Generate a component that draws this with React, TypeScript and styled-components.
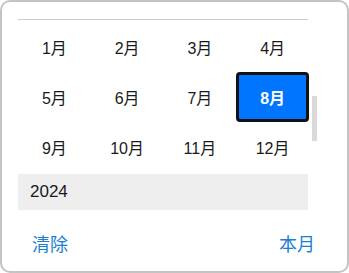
import styled, { createGlobalStyle } from "styled-components";

const GlobalStyle = createGlobalStyle`
  html, body {
    margin: 0;
    padding: 0;
    background: #ffffff;
  }
  * {
    box-sizing: border-box;
  }
`;

const months = ["1月", "2月", "3月", "4月", "5月", "6月", "7月", "8月", "9月", "10月", "11月", "12月"];
const selectedMonth = 7;

const App = () => {
  return (
    <>
      <GlobalStyle />
      <Panel>
        <Body>
          <Content>
            <Divider />
            <MonthGrid>
              {months.map((m, i) => (
                <MonthCell key={m} $active={i === selectedMonth}>
                  {m}
                </MonthCell>
              ))}
            </MonthGrid>
            <YearBar>2024</YearBar>
          </Content>
          <ScrollTrack>
            <ScrollThumb />
          </ScrollTrack>
        </Body>
        <Footer>
          <FooterButton>清除</FooterButton>
          <FooterButton>本月</FooterButton>
        </Footer>
      </Panel>
    </>
  );
};

export default App;

const Panel = styled.div`
  width: 349px;
  height: 273px;
  border: 2px solid #c4c4c4;
  border-radius: 10px;
  background: #ffffff;
  font-family: "Liberation Sans", Arial, "Noto Sans CJK SC", sans-serif;
  color: #1a1a1a;
  display: flex;
  flex-direction: column;
  overflow: hidden;
`;

const Body = styled.div`
  display: flex;
  flex-direction: row;
  padding-left: 16px;
`;

const Content = styled.div`
  width: 291px;
  display: flex;
  flex-direction: column;
`;

const Divider = styled.div`
  height: 1px;
  margin-top: 17px;
  background: #cccccc;
  margin-right: 1px;
`;

const MonthGrid = styled.div`
  margin-top: 2px;
  display: grid;
  grid-template-columns: repeat(4, 1fr);
  grid-auto-rows: 50px;
`;

const MonthCell = styled.div<{ $active: boolean }>`
  display: flex;
  align-items: center;
  justify-content: center;
  font-size: 16px;
  border-radius: 4px;
  ${({ $active }) =>
    $active
      ? `
    background: #0075ff;
    border: 3px solid #111111;
    color: #ffffff;
    font-weight: bold;
  `
      : ""}
`;

const YearBar = styled.div`
  margin-top: 2px;
  height: 36px;
  margin-right: 1px;
  background: #eeeeee;
  padding-left: 12px;
  display: flex;
  align-items: center;
  font-size: 17px;
`;

const ScrollTrack = styled.div`
  width: 5px;
  margin-left: 3px;
  padding-top: 94px;
`;

const ScrollThumb = styled.div`
  width: 5px;
  height: 45px;
  background: #d9d9d9;
`;

const Footer = styled.div`
  display: flex;
  justify-content: space-between;
  align-items: center;
  padding: 24px 32px 0 30px;
`;

const FooterButton = styled.span`
  font-size: 18px;
  line-height: 22px;
  color: #1a7fd4;
  cursor: pointer;
`;
